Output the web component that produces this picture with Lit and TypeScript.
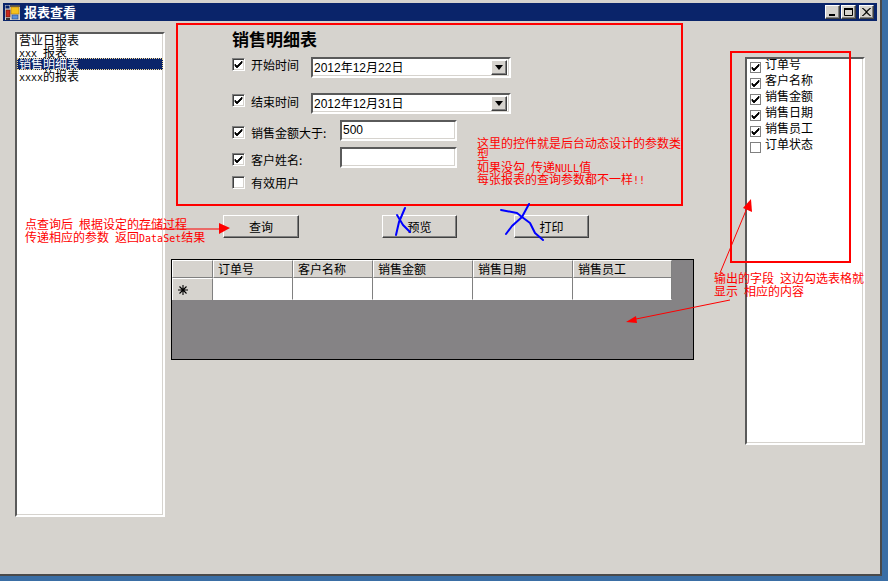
import { LitElement, html, css, svg } from "lit";
import { customElement } from "lit/decorators.js";

const check = html`<svg class="tick" viewBox="0 0 9 9" width="9" height="9"><path d="M1 4l2 2 5-5v2l-5 5-2-2z" fill="#000" stroke="#000" stroke-width=".8"/></svg>`;

@customElement("app-root")
export class AppRoot extends LitElement {
  static styles = css`
    :host { display: block; width: 888px; height: 581px; background: #3a6ea5; overflow: hidden;
      font: 12px/12px "Liberation Sans", "Noto Sans CJK SC", sans-serif; color: #000; }
    * { box-sizing: border-box; }
    .window { position: relative; width: 882px; height: 576px; background: #d6d3ce; padding-top: 3px;
      border-right: 2px solid #4a4a4a; border-bottom: 2px solid #4a4a4a; }
    .title { margin-left: 3px; width: 874px; height: 18px; background: #0a246a; display: flex; align-items: center;
      color: #fff; font: bold 13px/18px "Noto Sans CJK SC", sans-serif; padding: 0 3px 0 2px; }
    .title .logo { margin-right: 4px; flex: none; }
    .title .name { flex: 1; }
    .cap { width: 15px; height: 14px; background: #d6d3ce; flex: none; display: flex; align-items: center; justify-content: center;
      border: 1px solid; border-color: #fff #404040 #404040 #fff; box-shadow: inset -1px -1px #808080; }
    .cap + .cap { margin-left: 1px; }
    .cap.close { margin-left: 3px; }
    .body { display: grid; grid-template-columns: 150px 523px 165px; column-gap: 6px; padding: 2px 0 0 15px; }
    .sunken { background: #fff; border: 2px solid; border-color: #5a5a5a #fff #fff #5a5a5a;
      box-shadow: inset -1px -1px #d6d3ce; }
    .list { margin-top: 9px; height: 485px; font-family: "Noto Sans CJK SC", sans-serif; }
    .m { font: 10px/0 "DejaVu Sans Mono", "Liberation Mono", monospace; white-space: pre; }
    .item { height: 12px; padding-left: 2px; white-space: nowrap; }
    .item.sel { background: #0a246a; color: #fff; outline: 1px dotted #f5db95; outline-offset: -1px; }
    .center { display: flex; flex-direction: column; }
    .params { margin-left: 5px; width: 507px; height: 183px; border: 2px solid #f00; padding: 5px 0 0 54px; }
    .head { font: bold 17px/17px "Noto Sans CJK SC", sans-serif; height: 17px; white-space: nowrap; }
    .row { display: flex; align-items: flex-start; height: 21px; }
    .r1 { margin-top: 10px; } .r2 { margin-top: 15px; } .r3, .r4 { margin-top: 6px; }
    .r5 { margin-top: 8px; height: 13px; }
    .cb { width: 13px; height: 13px; flex: none; background: #fff; border: 1px solid; border-color: #808080 #fff #fff #808080;
      box-shadow: inset 1px 1px #404040, inset -1px -1px #d6d3ce; display: flex; align-items: center; justify-content: center; margin-right: 6px; }
    .r1 .cb, .r2 .cb { margin-top: 1px; }
    .r3 .cb, .r4 .cb { margin-top: 6px; }
    .lab { font-family: "Noto Sans CJK SC", sans-serif; white-space: nowrap; flex: none; margin-top: 2px; }
    .r1 .lab, .r2 .lab { width: 60px; }
    .r2 .lab { margin-top: 3px; }
    .r3 .lab, .r4 .lab { width: 89px; margin-top: 7px; }
    .r5 .lab { margin-top: 1px; }
    .dtp { width: 200px; height: 21px; display: flex; align-items: center; justify-content: space-between; padding: 0 2px 0 1px; }
    .arrow { width: 16px; height: 15px; background: #d6d3ce; border: 1px solid; border-color: #fff #404040 #404040 #fff;
      box-shadow: inset -1px -1px #808080; display: flex; align-items: center; justify-content: center; }
    .input { width: 117px; height: 21px; padding: 2px 1px; }
    .buttons { display: flex; margin: 9px 0 0 52px; }
    .btn { width: 75px; height: 23px; background: #d6d3ce; border: 1px solid; border-color: #fff #404040 #404040 #fff;
      box-shadow: inset -1px -1px #808080; display: flex; align-items: center; justify-content: center;
      font-family: "Noto Sans CJK SC", sans-serif; }
    .btn.first { width: 76px; margin-right: 83px; }
    .btn.mid { margin-right: 57px; }
    .grid { margin-top: 21px; width: 523px; height: 101px; background: #858385; border: 1px solid #000; }
    .grow { display: flex; width: 501px; }
    .gh { height: 18px; background: #d6d3ce; border-top: 1px solid #fff; border-left: 1px solid #fff; border-right: 1px solid #808080;
      border-bottom: 1px solid #808080; padding: 2px 0 0 4px; font-family: "Noto Sans CJK SC", sans-serif; white-space: nowrap; flex: none; }
    .gc { height: 22px; background: #fff; border-right: 1px solid #808080; border-bottom: 1px solid #fff; flex: none; }
    .w41 { width: 41px; } .w80 { width: 80px; } .w100 { width: 100px; } .w99 { width: 99px; }
    .gr { height: 22px; width: 41px; flex: none; background: #d6d3ce; border-top: 1px solid #fff; border-left: 1px solid #fff; border-right: 1px solid #808080;
      padding: 5px 0 0 4px; }
    .gr svg { display: block; }
    .checks { margin: 34px 0 0 45px; width: 120px; height: 388px; overflow: hidden; font-family: "Noto Sans CJK SC", sans-serif; }
    .ci { display: flex; height: 16px; padding-left: 3px; white-space: nowrap; }
    .fcb { width: 11px; height: 11px; margin: 3px 4px 0 0; flex: none; border: 1px solid #808080; background: #fff; display: flex; align-items: center; justify-content: center; }
    .ci .txt { margin-top: -1px; }
    .marks { position: absolute; left: 0; top: 0; pointer-events: none; }
    .note { position: absolute; color: #f00; font-family: "Noto Sans CJK SC", sans-serif; white-space: nowrap; }
    .n1 { left: 477px; top: 137px; line-height: 12px; }
    .n2 { left: 25px; top: 217px; line-height: 13px; }
    .n3 { left: 714px; top: 271px; line-height: 13px; }
  `;

  render() {
    const sp = html`<span class="m"> </span>`;
    return html`
      <div class="window">
        <div class="title">
          <svg class="logo" width="15" height="15" viewBox="0 0 15 15">
            <rect x="0" y="0" width="15" height="15" fill="#d6d3ce"/>
            <rect x=".5" y=".5" width="4" height="3" fill="#0a246a"/><rect x="5" y="0" width="10" height="2" fill="#555"/>
            <rect x="6" y="2" width="8" height="7" fill="#f6c21c" stroke="#b07a10" stroke-width=".6"/>
            <rect x="1" y="5" width="4" height="7" fill="#c8281c" stroke="#5a1208" stroke-width=".6"/>
            <rect x="7" y="10" width="6" height="4" fill="#5b8fd8" stroke="#24478a" stroke-width=".6"/>
            <rect x="1" y="13" width="4" height="2" fill="#333"/>
          </svg>
          <span class="name">报表查看</span>
          <div class="cap"><svg width="9" height="9" viewBox="0 0 9 9"><rect x="1" y="6" width="6" height="2" fill="#000"/></svg></div>
          <div class="cap"><svg width="11" height="10" viewBox="0 0 11 10"><path d="M1.5 1.5h8v7h-8z" fill="none" stroke="#000"/><rect x="1" y="1" width="9" height="2" fill="#000"/></svg></div>
          <div class="cap close"><svg width="9" height="8" viewBox="0 0 9 8"><path d="M1 0l3.5 3 3.500-3h1l-4 4 4 4h-1l-3.500-3-3.500 3h-1l4-4-4-4z" fill="#000" stroke="#000" stroke-width=".4"/></svg></div>
        </div>
        <div class="body">
          <div class="list sunken">
            <div class="item">营业日报表</div>
            <div class="item"><span class="m">xxx </span>报表</div>
            <div class="item sel">销售明细表</div>
            <div class="item"><span class="m">xxxx</span>的报表</div>
          </div>
          <div class="center">
            <div class="params">
              <div class="head">销售明细表</div>
              <div class="row r1"><div class="cb">${check}</div><div class="lab">开始时间</div>
                <div class="dtp sunken"><span>2012年12月22日</span><div class="arrow">${this.tri()}</div></div></div>
              <div class="row r2"><div class="cb">${check}</div><div class="lab">结束时间</div>
                <div class="dtp sunken"><span>2012年12月31日</span><div class="arrow">${this.tri()}</div></div></div>
              <div class="row r3"><div class="cb">${check}</div><div class="lab">销售金额大于:</div>
                <div class="input sunken">500</div></div>
              <div class="row r4"><div class="cb">${check}</div><div class="lab">客户姓名:</div>
                <div class="input sunken"></div></div>
              <div class="row r5"><div class="cb"></div><div class="lab">有效用户</div></div>
            </div>
            <div class="buttons">
              <div class="btn first">查询</div>
              <div class="btn mid">预览</div>
              <div class="btn">打印</div>
            </div>
            <div class="grid">
              <div class="grow">
                <div class="gh w41"></div>
                <div class="gh w80">订单号</div><div class="gh w80">客户名称</div>
                <div class="gh w100">销售金额</div><div class="gh w100">销售日期</div><div class="gh w99">销售员工</div>
              </div>
              <div class="grow">
                <div class="gr"><svg width="12" height="12" viewBox="0 0 12 12"><path d="M6 1v10M1 6h10M2.500 2.500l7 7M9.500 2.500l-7 7" stroke="#000" stroke-width="1.100" fill="none"/></svg></div>
                <div class="gc w80"></div><div class="gc w80"></div><div class="gc w100"></div><div class="gc w100"></div><div class="gc w99"></div>
              </div>
            </div>
          </div>
          <div class="checks sunken">
            ${[["订单号", true], ["客户名称", true], ["销售金额", true], ["销售日期", true], ["销售员工", true], ["订单状态", false]].map(
              ([t, on]) => html`<div class="ci"><div class="fcb">${on ? check : ""}</div><span class="txt">${t}</span></div>`
            )}
          </div>
        </div>

        <div class="note n1">这里的控件就是后台动态设计的参数类<br>型<br>如果没勾${sp}传递<span class="m">NULL</span>值<br>每张报表的查询参数都不一样<span class="m">!!</span></div>
        <div class="note n2">点查询后${sp}根据设定的存储过程<br>传递相应的参数${sp}返回<span class="m">DataSet</span>结果</div>
        <div class="note n3">输出的字段${sp}这边勾选表格就<br>显示${sp}相应的内容</div>

        <svg class="marks" width="882" height="576" viewBox="0 0 882 576">
          ${svg`
            <rect x="731" y="52" width="119" height="210" fill="none" stroke="#f00" stroke-width="2"/>
            <path d="M138 229H222" stroke="#f00" stroke-width="1" fill="none"/>
            <path d="M219 223L230 228L219 234z" fill="#f00"/>
            <path d="M720 273L747 208" stroke="#f00" stroke-width="1" fill="none"/>
            <path d="M751 199L752 212L743 208z" fill="#f00"/>
            <path d="M730 300L636 319" stroke="#f00" stroke-width="1" fill="none"/>
            <path d="M626 322L636 316L637 323z" fill="#f00"/>
            <g fill="none" stroke="#00f" stroke-width="2" stroke-linejoin="round" stroke-linecap="round">
              <path d="M405 208L399 222L396 235"/>
              <path d="M397 215L403 225L410 232"/>
              <path d="M529 204L522 217L512 226L506 234"/>
              <path d="M501 210L517 213L522 217L530 223L535 233L543 240"/>
            </g>
          `}
        </svg>
      </div>
    `;
  }

  tri() {
    return html`<svg width="8" height="5" viewBox="0 0 8 5"><path d="M0 0h8L4 5z" fill="#000"/></svg>`;
  }
}
